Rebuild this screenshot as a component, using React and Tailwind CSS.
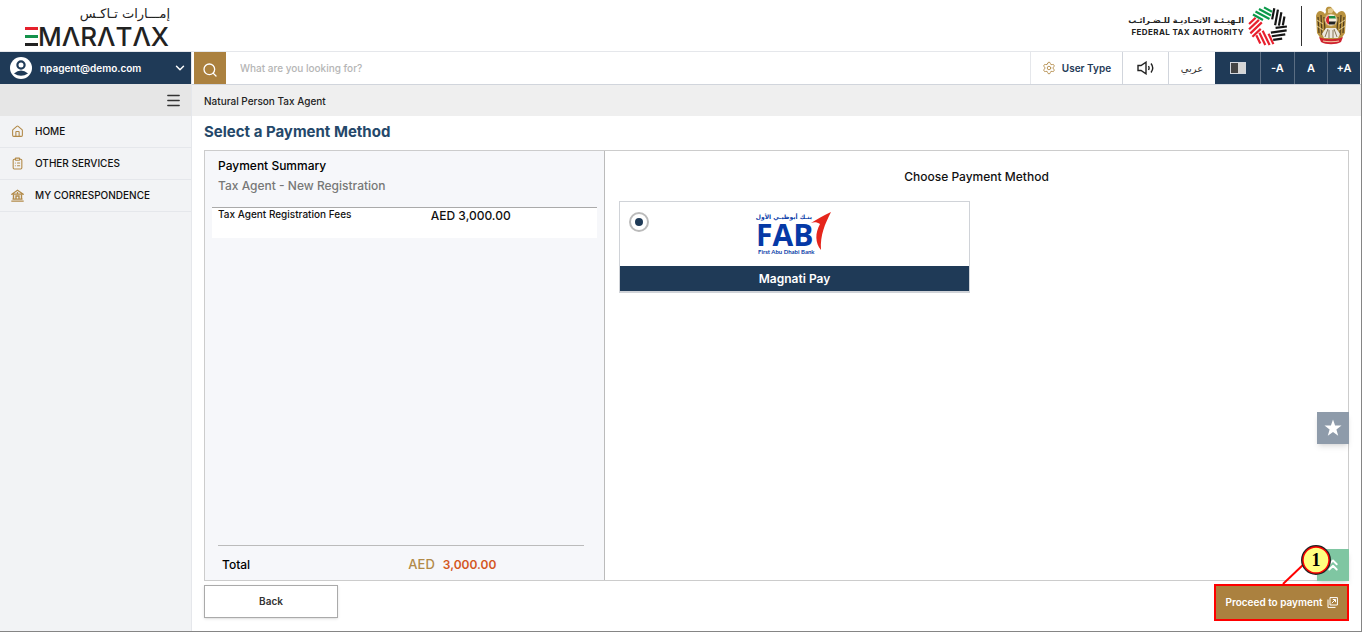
import { ChevronDown, ChevronsUp, ClipboardList, House, Menu, Search, Settings } from 'lucide-react';

const RING = [
  { angle: 0, color: '#0b9a4a' },
  { angle: 72, color: '#151515' },
  { angle: 144, color: '#151515' },
  { angle: 216, color: '#e8202e' },
  { angle: 288, color: '#e8202e' },
];

function BankIcon({ size, color }) {
  return (
    <svg width={size} height={size} viewBox="0 0 13 13" fill="none" stroke={color} aria-hidden="true">
      <path d="M0.8 5.2 L6.5 1.2 L12.2 5.2 Z" strokeWidth="1.2" />
      <path d="M2.5 5.5 V10 M10.5 5.5 V10 M5 10 V7 H8 V10" strokeWidth="1.4" />
      <path d="M6.5 3 V5" strokeWidth="1.4" />
      <path d="M1.5 10.2 H11.5 M0.3 12.2 H12.7" strokeWidth="1.3" />
    </svg>
  );
}

const NAV_ITEMS = [
  { label: 'HOME', icon: House },
  { label: 'OTHER SERVICES', icon: ClipboardList },
  { label: 'MY CORRESPONDENCE', icon: BankIcon },
];

function EmaraTaxLogo() {
  return (
    <svg className="overflow-visible" width="150" height="48" viewBox="0 0 150 48" role="img" aria-label="EmaraTax">
      <text x="148" y="16" textAnchor="end" direction="ltr" fontSize="13" fill="#222" fontFamily="'DejaVu Sans', sans-serif">
        إمـــارات تـاكـس
      </text>
      <rect x="3" y="25" width="13" height="3" fill="#e5202c" />
      <rect x="3" y="33" width="13" height="3" fill="#14924a" />
      <rect x="3" y="41" width="13" height="3" fill="#222" />
      <text x="16" y="44" fontSize="26" fontWeight="500" fill="#222" fontFamily="Inter, sans-serif">
        MΛRΛTΛX
      </text>
    </svg>
  );
}

function AuthorityEmblem() {
  return (
    <svg width="40" height="40" viewBox="-20 -20 40 40" aria-hidden="true">
      {RING.map(({ angle, color }) => (
        <g key={angle} transform={`rotate(${angle})`} stroke={color} strokeWidth="2.2">
          <path d="M-15 -11.5 L-5 -6 M-12.5 -14.5 L1.5 -7 M-9 -17 L3 -10.5 M-4 -18.6 L4 -14.3" />
        </g>
      ))}
    </svg>
  );
}

function FalconEmblem() {
  return (
    <svg width="32" height="40" viewBox="0 0 32 40" aria-hidden="true">
      <path
        d="M16 1 C12 0 10 2 11 6 L10 8 C6 3 2 5 1 10 L2 27 L6 33 L12 35 H20 L26 33 L30 27 L31 10 C30 5 26 3 22 8 L19 5 Z"
        fill="#b9923f"
      />
      <path
        d="M3 11 L4 27 M6 9 L7 29 M9 11 L10 24 M29 11 L28 27 M26 9 L25 29 M23 11 L22 24"
        stroke="#4d3b1c"
        strokeWidth="1.2"
        fill="none"
      />
      <path d="M2 14 L8 18 M2 20 L8 24 M30 14 L24 18 M30 20 L24 24" stroke="#e6cf91" strokeWidth="1" />
      <path d="M13 3 L16 2 L19 4 L17 7 H13 Z" fill="#e2c98b" />
      <path d="M7 28 L11 22 H21 L25 28 L23 32 H9 Z" fill="#ece8df" />
      <path d="M10 31 L13 23 M14 32 V24 M18 32 V24 M22 31 L19 23" stroke="#887657" strokeWidth="1" />
      <circle cx="16" cy="14" r="6.2" fill="#f6eee0" stroke="#c2a054" strokeWidth="1" />
      <path d="M14 10 H20 L21 12.5 H14 Z" fill="#1b8a43" />
      <path d="M14 15.5 H21 L19.5 18.5 H14 Z" fill="#222" />
      <path d="M14 9.5 V18.5 C10 17.5 10 10.5 14 9.5 Z" fill="#d9242e" />
      <path d="M4 31 C10 34 22 34 28 31 L26 36 C21 39 11 39 6 36 Z" fill="#cf2430" />
      <path d="M8 35 C13 36 19 36 24 35" stroke="#f3cfa8" strokeWidth="1" fill="none" />
    </svg>
  );
}

function FabLogo() {
  return (
    <svg className="overflow-visible" width="74" height="46" viewBox="0 0 74 46" role="img" aria-label="First Abu Dhabi Bank">
      <text x="54" y="8" textAnchor="end" direction="ltr" fontSize="6" fontWeight="700" fill="#0a3da8" fontFamily="'DejaVu Sans', sans-serif">
        بنـك أبوظبـي الأول
      </text>
      <text x="-2" y="35" fontSize="30" fontWeight="700" fill="#0539a6" fontFamily="'Open Sans', sans-serif">
        FAB
      </text>
      <text x="0" y="43" fontSize="6" fontWeight="700" fill="#0a3da8" fontFamily="Lato, sans-serif">
        First Abu Dhabi Bank
      </text>
      <path d="M73 1 C67 13 62 24 63 39 C57 32 57 22 62 13 C59 11 56 11 53 12 C59 8 65 5 73 1 Z" fill="#e5261c" />
    </svg>
  );
}

function SpeakerIcon() {
  return (
    <svg width="18" height="14" viewBox="0 0 18 14" fill="none" stroke="#222" strokeWidth="1.4" aria-hidden="true">
      <path d="M1 4.5 H4 L9 1.2 V12.8 L4 9.5 H1 Z" />
      <path d="M11.5 5 Q12.7 7 11.5 9 M14 2.5 Q17.5 7 14 11.5" />
    </svg>
  );
}

function OpenWindowIcon() {
  return (
    <svg width="11" height="11" viewBox="0 0 11 11" fill="none" stroke="#fff" aria-hidden="true">
      <path d="M3 0.6 H10.4 V8 H3 Z M1 2.5 V10.4 H8.5" />
      <path d="M4.8 6.2 L8.3 2.7 M5.8 2.5 H8.5 V5.2" />
    </svg>
  );
}

function Header() {
  return (
    <header className="flex h-[52px] items-center justify-between border-b border-gray-200 pr-[14px] pl-[22px]">
      <EmaraTaxLogo />
      <div className="flex items-center">
        <div className="mr-1 text-right text-[#222]">
          <div dir="rtl" className="font-['DejaVu_Sans',sans-serif] text-[8px] leading-3 font-bold">
            الـهيـئـة الاتحـاديـة للـضـرائـب
          </div>
          <div className="text-[8px] leading-[10px] font-bold tracking-wider">FEDERAL TAX AUTHORITY</div>
        </div>
        <AuthorityEmblem />
        <div className="mx-[13px] h-10 w-px bg-[#333]" />
        <FalconEmblem />
      </div>
    </header>
  );
}

function Sidebar() {
  return (
    <aside className="w-48 shrink-0 border-r border-gray-200 bg-[#f2f3f5]">
      <button className="flex h-8 w-full items-center bg-[#1f3a57] pr-1 pl-[10px] text-white">
        <svg width="22" height="22" viewBox="0 0 22 22" aria-hidden="true">
          <circle cx="11" cy="11" r="11" fill="#fff" />
          <circle cx="11" cy="8" r="3.6" fill="none" stroke="#1f3a57" strokeWidth="2.2" />
          <path d="M4 16.5 Q11 10.5 18 16.5 Q11 21 4 16.5" fill="#1f3a57" />
        </svg>
        <span className="ml-2 flex-1 text-left text-[10px] font-semibold">npagent@demo.com</span>
        <ChevronDown size={14} strokeWidth={2.5} />
      </button>
      <div className="flex h-8 items-center justify-end bg-[#e6e6e6] pr-[9px]">
        <button aria-label="Toggle menu">
          <Menu size={17} color="#333" strokeWidth={2} />
        </button>
      </div>
      <nav>
        {NAV_ITEMS.map(({ label, icon: Icon }) => (
          <a
            key={label}
            href="#"
            className="flex h-8 items-center gap-[11px] border-b border-gray-200 pl-[11px] text-[10px] font-medium text-[#111]"
          >
            <Icon size={13} color="#b28a48" />
            {label}
          </a>
        ))}
      </nav>
    </aside>
  );
}

function Toolbar() {
  return (
    <div className="mr-px flex h-8 items-stretch text-[11px] font-semibold">
      <button aria-label="Search" className="ml-0.5 flex w-8 items-center justify-center bg-[#ab813f] pt-1 text-white">
        <Search size={16} strokeWidth={2} />
      </button>
      <input
        type="text"
        aria-label="Search"
        placeholder="What are you looking for?"
        className="min-w-0 flex-1 px-[14px] text-[10px] font-medium outline-none placeholder:text-[#b5b5b5]"
      />
      <button className="flex w-[92px] items-center justify-center gap-1.5 border-l border-gray-200 text-[10px] text-[#1f3a57]">
        <Settings size={14} color="#b28a48" strokeWidth={1.5} />
        User Type
      </button>
      <button aria-label="Read aloud" className="flex w-[46px] items-center justify-center border-l border-gray-300">
        <SpeakerIcon />
      </button>
      <button className="w-[47px] border-l border-gray-300 font-['DejaVu_Sans',sans-serif] text-[10px] font-normal text-[#333]">
        عربي
      </button>
      <div className="flex bg-[#1f3a57] text-white">
        <button aria-label="Contrast" className="flex w-[45px] items-center justify-center">
          <span className="flex h-3 w-4 border border-gray-300 bg-[#d5d5d5]">
            <span className="w-1/2 bg-[#444]" />
          </span>
        </button>
        <button className="w-[34px] border-l border-[#5b6e83]">-A</button>
        <button className="w-[33px] border-l border-[#5b6e83]">A</button>
        <button className="w-[33px] border-l border-[#5b6e83]">+A</button>
      </div>
    </div>
  );
}

function PaymentSummary() {
  return (
    <section className="flex w-[35%] flex-col border-r border-[#bbb] bg-[#f6f7fa]">
      <h2 className="px-[13px] pt-[5px] text-xs leading-5 font-medium text-black">Payment Summary</h2>
      <p className="px-[13px] text-xs leading-5 font-medium text-[#777]">Tax Agent - New Registration</p>
      <div className="mt-[11px] px-[7px]">
        <table className="w-full border-t border-[#aaa] bg-white text-left text-[#111]">
          <tbody>
            <tr className="h-[30px] align-top">
              <th scope="row" className="w-[55%] pl-1.5 text-[10px] leading-3 font-medium">
                Tax Agent Registration Fees
              </th>
              <td className="pl-[7px] text-xs leading-4 font-medium">AED 3,000.00</td>
            </tr>
          </tbody>
        </table>
      </div>
      <div className="mt-auto mr-5 ml-[13px] flex h-[35px] items-center border-t border-[#bbb] pt-1 text-xs font-medium">
        <span className="w-[52%] pl-1 text-black">Total</span>
        <span className="text-[13px] text-[#b28a48]">AED</span>
        <span className="ml-2 font-semibold text-[#d4581f]">3,000.00</span>
      </div>
    </section>
  );
}

function PaymentMethods() {
  return (
    <section className="flex-1 px-[14px] pt-4">
      <h2 className="text-center text-xs leading-5 font-medium text-[#111]">Choose Payment Method</h2>
      <label className="relative mt-[14px] block w-[351px] max-w-full border border-b-2 border-[#d0d3d8]">
        <input
          type="radio"
          name="method"
          defaultChecked
          className="absolute top-[10px] left-[9px] flex size-5 appearance-none items-center justify-center rounded-full border-2 border-[#bbb] bg-white before:size-2 before:rounded-full checked:before:bg-[#1f3a57]"
        />
        <span className="flex h-16 items-center justify-center">
          <FabLogo />
        </span>
        <span className="block bg-[#1f3a57] text-center text-xs leading-[25px] font-semibold text-white">Magnati Pay</span>
      </label>
    </section>
  );
}

function StepMarker() {
  return (
    <svg className="pointer-events-none absolute right-[18px] bottom-full" width="52" height="41" viewBox="0 0 52 41" aria-hidden="true">
      <path d="M4 41 L26 20" stroke="#f00" strokeWidth="2" />
      <circle cx="37" cy="17" r="14" fill="#ffff80" stroke="#222" strokeWidth="2" />
      <circle cx="37" cy="17" r="13" fill="none" stroke="#f00" strokeWidth="1.4" />
      <text x="37" y="23" textAnchor="middle" fontSize="18" fontWeight="700" fontFamily="'Liberation Serif', serif">
        1
      </text>
    </svg>
  );
}

export default function App() {
  return (
    <div className="flex min-h-screen flex-col border-r border-b border-[#858585] bg-white font-[Inter,sans-serif]">
      <Header />
      <div className="flex flex-1">
        <Sidebar />
        <div className="flex min-w-0 flex-1 flex-col">
          <Toolbar />
          <div className="h-8 border-t border-gray-300 bg-[#efefef] px-3 text-[10px] leading-8 font-medium text-[#222]">
            Natural Person Tax Agent
          </div>
          <main className="flex flex-1 flex-col px-3">
            <h1 className="pt-1 pb-1.5 text-[15px] leading-6 font-bold text-[#25486a]">Select a Payment Method</h1>
            <div className="relative flex flex-1 border border-[#ccc]">
              <PaymentSummary />
              <PaymentMethods />
              <button
                aria-label="Favourites"
                className="absolute -right-px bottom-[136px] flex size-8 items-center justify-center bg-[#8e9baa] shadow-md"
              >
                <svg width="18" height="18" viewBox="0 0 18 18" fill="#fff" aria-hidden="true">
                  <path d="M9 0.5 L11.1 6.4 L17.5 6.6 L12.4 10.5 L14.2 16.8 L9 13.1 L3.8 16.8 L5.6 10.5 L0.5 6.6 L6.9 6.4 Z" />
                </svg>
              </button>
              <button
                aria-label="Back to top"
                className="absolute -right-px -bottom-px flex size-8 items-center justify-center bg-[#7fc6a2] shadow-md"
              >
                <ChevronsUp size={18} color="#fff" strokeWidth={2.5} />
              </button>
            </div>
            <div className="mt-[3px] mb-[10px] flex items-start justify-between">
              <button className="mt-px h-[33px] w-[134px] border border-[#aaa] text-[10px] font-semibold text-[#333] shadow">
                Back
              </button>
              <div className="relative">
                <button className="flex h-[37px] w-[135px] items-center justify-center gap-1 border-2 border-[#f00] bg-[#ab813f] text-[10px] font-semibold whitespace-nowrap text-white">
                  Proceed to payment
                  <OpenWindowIcon />
                </button>
                <StepMarker />
              </div>
            </div>
          </main>
        </div>
      </div>
    </div>
  );
}
